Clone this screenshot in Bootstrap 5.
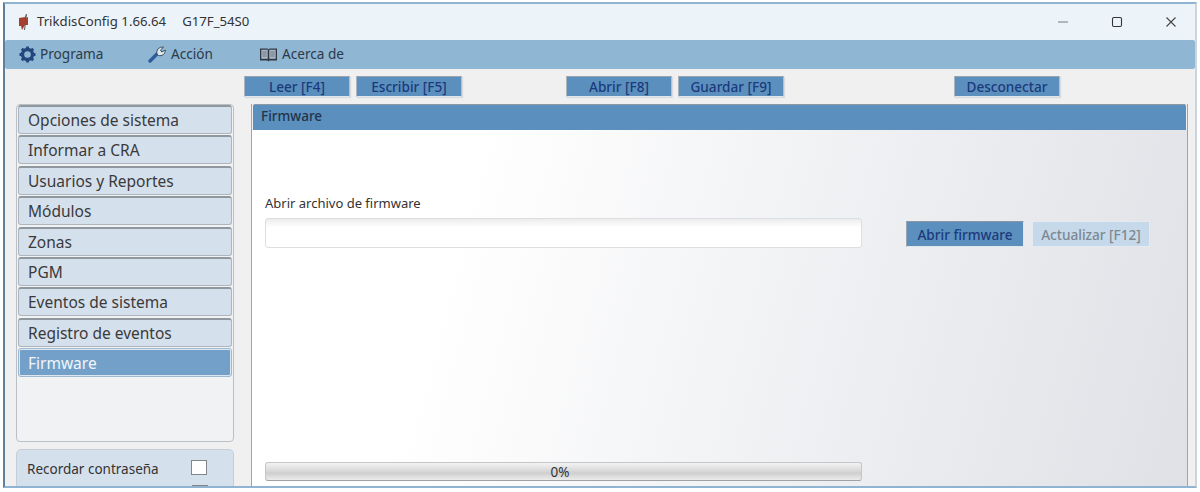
<!DOCTYPE html>
<html lang="es">
<head>
<meta charset="utf-8">
<title>TrikdisConfig</title>
<link href="https://cdn.jsdelivr.net/npm/bootstrap@5.3.0/dist/css/bootstrap.min.css" rel="stylesheet">
<style>
html,body{height:492px;overflow:hidden;background:#fff}
body{font-family:"Noto Sans","DejaVu Sans",sans-serif;font-size:14px;color:#333}
.appwin{width:1194px;height:486px;margin:2px 0 0 3px;border:2px solid #8fb3d0;border-left-color:#5f7f9c;border-right-color:#c9d4de;background:#f0f0f0;overflow:hidden}
.titlebar{height:36px;background:#ecf4fa;color:#333;font-size:13.2px;padding:0 0 0 13px}
.titlebar .ttl{margin-left:8px}
.titlebar .ttl span{margin-left:16px}
.winbtns{width:138px;padding-right:18px}
.menubar{height:29px;background:#8fb6d2;border-radius:2px;padding-left:14px;font-size:13.6px;color:#2b3a4a}
.menubar .mi{gap:4px}
.mi1{width:129px}
.mi2{width:111px}
.tbar{height:35px;padding:7px 0 0 239px}
.tool{height:21px;width:106px;background:#5b90be;color:#1c3a7c;font-size:13.6px;font-weight:500;line-height:19px;text-align:center;border:1px solid #dfe6ec;border-top-color:#98a4ae;border-left-color:#a9b4bd;border-right-color:#b9c1c8;box-shadow:1px 1px 1px #d8dce0;padding:0}
.gap6{margin-left:6px}
.gap104{margin-left:104px}
.gap171{margin-left:170px}
.mainrow{height:385px}
.sidecol{width:218px;margin-left:11px}
.navbox{height:338px;border:1px solid #b9bfc5;border-radius:4px;background:#f1f2f4;padding:0 1px}
.navitem{height:29px;margin-bottom:1.38px;background:#d5e0ed;border:1px solid #aeb5bc;border-top:2px solid #8f979f;border-radius:3px;padding-left:9px;font-size:15.5px;line-height:27px;color:#3a3a3a}
.navitem.sel{background:#72a0c8;color:#f2f6fa;border:2px solid #dbe6f0;outline:1px solid #9db8d0;outline-offset:-1px;line-height:26px;margin-top:1px;padding-left:8px}
.auxbox{height:60px;margin-top:7px;background:#d5e0ed;border:1px solid #c4ced9;border-radius:5px;padding:9px 0 0 10px;font-size:13.5px}
.auxrow{height:25px;line-height:20px}
.chk{width:16px;height:15px;background:#fff;border:1px solid #80868c;display:block;margin-left:32px;margin-top:1px}
.chk.dim{background:#c3c7cb;margin-right:25px}
.workcol{width:937px;margin-left:17px;border-left:1px solid #9ea4aa;border-right:1px solid #9ea4aa}
.paneltitle{height:26px;margin:0 1px 0 1px;background:#5b90be;border-top:1px solid #8d98a2;border-radius:2px 2px 0 0;padding-left:8px;font-size:13.5px;font-weight:500;line-height:22px;color:#22344a}
.panelbody{height:360px;background:linear-gradient(105deg,#fff 0%,#fff 22%,#dfe1e6 100%);padding:64px 0 0 13px}
.lbl{font-size:13px;line-height:18px;color:#333;margin:0 0 6px 0}
.fileinput{width:597px;height:30px;border:1px solid #dcdfe2;border-radius:3px;background:linear-gradient(#ececec,#fff 30%,#fff);display:block;padding:0}
.actbtn{height:26px;width:118px;padding:0;margin-top:3px;margin-left:44px;font-size:13.6px;font-weight:500;line-height:23px;text-align:center;background:#5b90be;color:#1c3a7c;border:1px solid #dfe6ec;border-top-color:#8a96a0;border-left-color:#98a4ae}
.actbtn.off{background:#c6d9ea;color:#7c8791;border-color:#e4eaf0;margin-left:8px}
.prog{width:597px;height:19px;margin-top:214px;padding-right:7px;border:1px solid #c4c6c8;border-bottom-color:#9fa2a5;border-radius:3px;background:linear-gradient(#f3f3f3,#d6d6d6 50%,#cfcfcf 60%,#ececec);font-size:13.5px;line-height:18px;text-align:center;color:#333}
</style>
</head>
<body>
<div class="appwin">
  <div class="titlebar d-flex align-items-center">
    <svg width="11" height="18" viewBox="0 0 11 18" aria-hidden="true"><path d="M8 1 7 4 1 5 1 13 3 13 4 17 7 12 10 12 10 4 8 5Z" fill="#a8402f"/><path d="M8.500 1 6.500 17" stroke="#5a5a5a" stroke-width="1" fill="none"/></svg>
    <div class="ttl flex-grow-1">TrikdisConfig 1.66.64<span>G17F_54S0</span></div>
    <div class="winbtns d-flex justify-content-between align-items-center">
      <svg width="12" height="12" viewBox="0 0 12 12" aria-hidden="true"><path d="M1 6H11" stroke="#8a8f94" stroke-width="1.2"/></svg>
      <svg width="12" height="12" viewBox="0 0 12 12" aria-hidden="true"><rect x="1.500" y="1.500" width="9" height="9" rx="1.400" fill="none" stroke="#333" stroke-width="1.100"/></svg>
      <svg width="12" height="12" viewBox="0 0 12 12" aria-hidden="true"><path d="M1.500 1.500 10.500 10.500M10.500 1.500 1.500 10.500" stroke="#444" stroke-width="1.100"/></svg>
    </div>
  </div>
  <div class="menubar d-flex align-items-center">
    <div class="mi mi1 d-flex align-items-center">
      <svg width="17" height="17" viewBox="0 0 17 17" aria-hidden="true"><circle cx="8.500" cy="8.500" r="5" fill="none" stroke="#24477c" stroke-width="3.400"/><path d="M8.500 .5V3.500M8.500 13.500V16.500M.5 8.500H3.500M13.500 8.500H16.500M2.800 2.800 5 5M12 12 14.200 14.200M14.200 2.800 12 5M5 12 2.800 14.200" stroke="#24477c" stroke-width="2.800"/></svg>
      <span>Programa</span>
    </div>
    <div class="mi mi2 d-flex align-items-center">
      <svg width="19" height="18" viewBox="0 0 19 18" aria-hidden="true"><path d="M2 16 10 8" stroke="#2e5c9a" stroke-width="3.400" stroke-linecap="round"/><path d="M9 9C8 5 11 1.500 15.500 2.200L12.500 5 13.800 7 17.300 5C17.500 9 14 11.500 10.500 10.500Z" fill="#dfe7ee" stroke="#3a4a5c" stroke-width="1"/></svg>
      <span>Acción</span>
    </div>
    <div class="mi d-flex align-items-center">
      <svg width="19" height="15" viewBox="0 0 19 15" aria-hidden="true"><path d="M1 1.500H8.500L9.500 2.500 10.500 1.500H18V13.500H10.500L9.500 14.500 8.500 13.500H1Z" fill="#2f3845"/><path d="M2.300 2.800H8.700V11.800H2.300ZM10.300 2.800H16.700V11.800H10.300Z" fill="#aab7c4"/><path d="M3.300 5H7.700M3.300 7H7.700M3.300 9H7.700M11.300 5H15.700M11.300 7H15.700M11.300 9H15.700" stroke="#5b6775" stroke-width=".8"/></svg>
      <span>Acerca de</span>
    </div>
  </div>
  <div class="tbar d-flex">
    <button type="button" class="tool">Leer [F4]</button>
    <button type="button" class="tool gap6">Escribir [F5]</button>
    <button type="button" class="tool gap104">Abrir [F8]</button>
    <button type="button" class="tool gap6">Guardar [F9]</button>
    <button type="button" class="tool gap171">Desconectar</button>
  </div>
  <div class="mainrow d-flex">
    <div class="sidecol">
      <div class="navbox">
        <div class="navitem">Opciones de sistema</div>
        <div class="navitem">Informar a CRA</div>
        <div class="navitem">Usuarios y Reportes</div>
        <div class="navitem">Módulos</div>
        <div class="navitem">Zonas</div>
        <div class="navitem">PGM</div>
        <div class="navitem">Eventos de sistema</div>
        <div class="navitem">Registro de eventos</div>
        <div class="navitem sel">Firmware</div>
      </div>
      <div class="auxbox">
        <div class="auxrow d-flex">Recordar contraseña<span class="chk"></span></div>
        <div class="auxrow d-flex justify-content-end"><span class="chk dim"></span></div>
      </div>
    </div>
    <div class="workcol">
      <div class="paneltitle">Firmware</div>
      <div class="panelbody">
        <p class="lbl">Abrir archivo de firmware</p>
        <div class="d-flex">
          <input type="text" class="fileinput" aria-label="Archivo de firmware">
          <button type="button" class="actbtn">Abrir firmware</button>
          <button type="button" class="actbtn off">Actualizar [F12]</button>
        </div>
        <div class="prog">0%</div>
      </div>
    </div>
  </div>
</div>
<script src="https://cdn.jsdelivr.net/npm/bootstrap@5.3.0/dist/js/bootstrap.bundle.min.js"></script>
</body>
</html>
